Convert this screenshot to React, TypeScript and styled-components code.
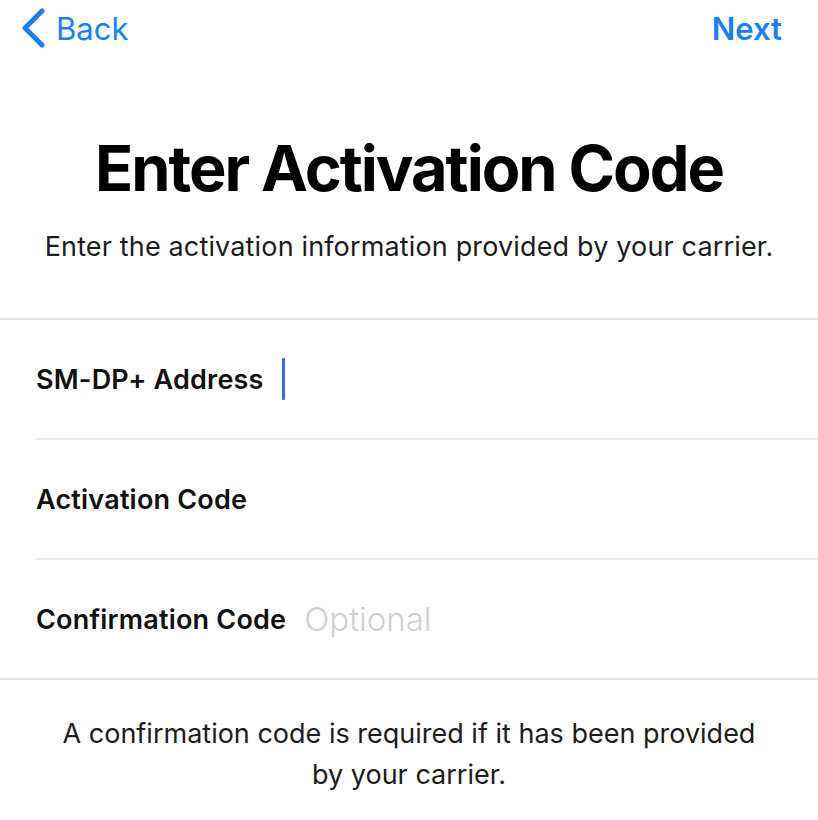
import styled, { createGlobalStyle } from "styled-components";

const GlobalStyle = createGlobalStyle`
  body {
    margin: 0;
    background: #ffffff;
    font-family: "Inter", "Roboto", sans-serif;
  }
`;

const Page = styled.div`
  width: 818px;
  height: 820px;
  background: #ffffff;
  display: flex;
  flex-direction: column;
  overflow: hidden;
`;

const NavBar = styled.div`
  display: flex;
  justify-content: space-between;
  align-items: center;
  height: 56px;
  padding: 0 36px 0 20px;
`;

const NavButton = styled.button<{ $bold?: boolean }>`
  display: flex;
  align-items: center;
  gap: 10px;
  border: none;
  background: none;
  padding: 0;
  color: #1a7ff0;
  font-family: "Inter", sans-serif;
  font-size: 31px;
  font-weight: ${(p) => (p.$bold ? 600 : 400)};
`;

const Header = styled.div`
  display: flex;
  flex-direction: column;
  align-items: center;
  padding-top: 74px;
`;

const Title = styled.h1`
  margin: 0;
  font-size: 63px;
  font-weight: 700;
  color: #000000;
  letter-spacing: -2px;
`;

const Subtitle = styled.p`
  margin: 24px 0 0;
  font-size: 27px;
  letter-spacing: 0.15px;
  color: #1c1c1c;
`;

const Form = styled.div`
  margin-top: 55px;
  border-top: 2px solid #e3e3e3;
  border-bottom: 2px solid #e3e3e3;
`;

const Row = styled.div<{ $last?: boolean }>`
  display: flex;
  align-items: center;
  height: 118px;
  margin-left: 36px;
  border-bottom: ${(p) => (p.$last ? "none" : "2px solid #ececec")};
`;

const Label = styled.span`
  font-size: 27px;
  font-weight: 600;
  letter-spacing: 0.2px;
  color: #111111;
`;

const Cursor = styled.span`
  display: inline-block;
  width: 3px;
  height: 42px;
  margin-left: 18px;
  background: #3b6fd9;
  border-radius: 1px;
`;

const Placeholder = styled.span`
  margin-left: 18px;
  font-size: 33px;
  font-weight: 300;
  color: #cfcfcf;
`;

const Note = styled.p`
  margin: 33px 56px 0;
  text-align: center;
  font-size: 27px;
  line-height: 41px;
  color: #1c1c1c;
`;

function Chevron() {
  return (
    <svg width="26" height="40" viewBox="0 0 26 40" fill="none">
      <path
        d="M22 3 L5 20 L22 37"
        stroke="#1a7ff0"
        strokeWidth="5"
        strokeLinecap="round"
        strokeLinejoin="round"
      />
    </svg>
  );
}

export default function App() {
  return (
    <Page>
      <GlobalStyle />
      <NavBar>
        <NavButton>
          <Chevron />
          Back
        </NavButton>
        <NavButton $bold>Next</NavButton>
      </NavBar>
      <Header>
        <Title>Enter Activation Code</Title>
        <Subtitle>Enter the activation information provided by your carrier.</Subtitle>
      </Header>
      <Form>
        <Row>
          <Label>SM-DP+ Address</Label>
          <Cursor />
        </Row>
        <Row>
          <Label>Activation Code</Label>
        </Row>
        <Row $last>
          <Label>Confirmation Code</Label>
          <Placeholder>Optional</Placeholder>
        </Row>
      </Form>
      <Note>A confirmation code is required if it has been provided by your carrier.</Note>
    </Page>
  );
}
